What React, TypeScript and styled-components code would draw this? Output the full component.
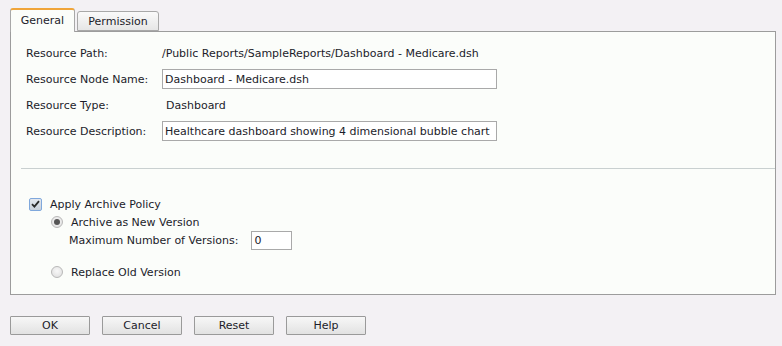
import styled, { createGlobalStyle } from 'styled-components';

const GlobalStyle = createGlobalStyle`
  html, body {
    margin: 0;
    padding: 0;
    background: #f3f1f4;
  }
  body {
    font-family: "DejaVu Sans", Verdana, sans-serif;
    font-size: 11px;
    color: #1c1c2a;
  }
`;

const fields = [
  { label: 'Resource Path:', value: '/Public Reports/SampleReports/Dashboard - Medicare.dsh' },
  { label: 'Resource Node Name:', input: 'Dashboard - Medicare.dsh' },
  { label: 'Resource Type:', value: 'Dashboard', indent: true },
  { label: 'Resource Description:', input: 'Healthcare dashboard showing 4 dimensional bubble chart' },
];

export default function App() {
  return (
    <Page>
      <GlobalStyle />
      <TabBar>
        <Tab $active>General</Tab>
        <Tab>Permission</Tab>
      </TabBar>
      <Panel>
        <FieldList>
          {fields.map((f) => (
            <FieldRow key={f.label}>
              <FieldLabel>{f.label}</FieldLabel>
              {f.input ? (
                <TextBox defaultValue={f.input} />
              ) : (
                <FieldValue $indent={f.indent}>{f.value}</FieldValue>
              )}
            </FieldRow>
          ))}
        </FieldList>
        <Separator />
        <ArchiveBlock>
          <OptionRow>
            <CheckBox>
              <svg width="9" height="8" viewBox="0 0 9 8">
                <path d="M1 4.2 L3.4 6.6 L8 1.2" fill="none" stroke="#2a2a2a" strokeWidth="1.8" />
              </svg>
            </CheckBox>
            Apply Archive Policy
          </OptionRow>
          <SubOptions>
            <OptionRow>
              <Radio $checked />
              Archive as New Version
            </OptionRow>
            <VersionRow>
              Maximum Number of Versions:
              <SmallBox defaultValue="0" />
            </VersionRow>
            <OptionRow $gap>
              <Radio />
              Replace Old Version
            </OptionRow>
          </SubOptions>
        </ArchiveBlock>
      </Panel>
      <ButtonBar>
        <Button>OK</Button>
        <Button>Cancel</Button>
        <Button>Reset</Button>
        <Button>Help</Button>
      </ButtonBar>
    </Page>
  );
}

const Page = styled.div`
  width: 782px;
  height: 346px;
  box-sizing: border-box;
  padding: 8px 6px 0 10px;
`;

const TabBar = styled.div`
  display: flex;
  align-items: flex-end;
  gap: 2px;
  height: 23px;
  position: relative;
  z-index: 1;
`;

const Tab = styled.div<{ $active?: boolean }>`
  box-sizing: border-box;
  display: flex;
  align-items: center;
  justify-content: center;
  border: 1px solid #a8a8a8;
  border-radius: 3px 3px 0 0;
  ${({ $active }) =>
    $active
      ? `
    width: 65px;
    height: 24px;
    margin-bottom: -1px;
    border-top: 2px solid #f0a53a;
    border-bottom: none;
    background: #fbfdfa;
    padding-bottom: 1px;
  `
      : `
    width: 82px;
    height: 20px;
    background: linear-gradient(#fafafa, #e6e6e6);
    padding-top: 1px;
  `}
`;

const Panel = styled.div`
  box-sizing: border-box;
  height: 264px;
  border: 1px solid #9c9c9c;
  background: #fbfdfa;
  padding-top: 8px;
`;

const FieldList = styled.div`
  display: flex;
  flex-direction: column;
  padding-left: 15px;
`;

const FieldRow = styled.div`
  display: grid;
  grid-template-columns: 136px auto;
  align-items: center;
  height: 26px;
`;

const FieldLabel = styled.span`
  white-space: nowrap;
`;

const FieldValue = styled.span<{ $indent?: boolean }>`
  padding-left: ${({ $indent }) => ($indent ? '4px' : '0')};
  white-space: nowrap;
`;

const TextBox = styled.input`
  box-sizing: border-box;
  width: 335px;
  height: 20px;
  margin: 0;
  padding: 0 2px;
  border: 1px solid #a9a9a9;
  background: #fff;
  font: inherit;
  color: #1c1c2a;
  outline: none;
`;

const Separator = styled.div`
  height: 1px;
  margin: 24px 0 0 10px;
  background: #c9d0d0;
`;

const ArchiveBlock = styled.div`
  display: flex;
  flex-direction: column;
  padding: 26px 0 0 18px;
`;

const OptionRow = styled.div<{ $gap?: boolean }>`
  display: flex;
  align-items: center;
  gap: 8px;
  height: 18px;
  margin-top: ${({ $gap }) => ($gap ? '14px' : '0')};
`;

const SubOptions = styled.div`
  display: flex;
  flex-direction: column;
  padding-left: 22px;
`;

const VersionRow = styled.div`
  display: flex;
  align-items: center;
  gap: 8px;
  height: 18px;
  padding-left: 18px;
`;

const CheckBox = styled.span`
  box-sizing: border-box;
  display: inline-flex;
  align-items: center;
  justify-content: center;
  width: 13px;
  height: 13px;
  border: 1px solid #7fa8dc;
  border-radius: 2px;
  background: linear-gradient(#e4e8ef, #c9d0da);
`;

const Radio = styled.span<{ $checked?: boolean }>`
  box-sizing: border-box;
  position: relative;
  display: inline-block;
  width: 12px;
  height: 12px;
  border: 1px solid #b8b8b8;
  border-radius: 50%;
  background: radial-gradient(circle at 50% 40%, #f8f8f8, #dcdcdc);
  &::after {
    content: '';
    display: ${({ $checked }) => ($checked ? 'block' : 'none')};
    position: absolute;
    left: 2px;
    top: 2px;
    width: 6px;
    height: 6px;
    border-radius: 50%;
    background: #555;
  }
`;

const SmallBox = styled(TextBox)`
  width: 41px;
  height: 19px;
  margin-left: 5px;
`;

const ButtonBar = styled.div`
  display: flex;
  gap: 12px;
  margin-top: 21px;
`;

const Button = styled.button`
  box-sizing: border-box;
  width: 80px;
  height: 19px;
  margin: 0;
  padding: 0;
  border: 1px solid #9a9a9a;
  border-radius: 1px;
  background: linear-gradient(#f7f7f7, #e2e2e2);
  font: inherit;
  color: #1c1c2a;
`;
